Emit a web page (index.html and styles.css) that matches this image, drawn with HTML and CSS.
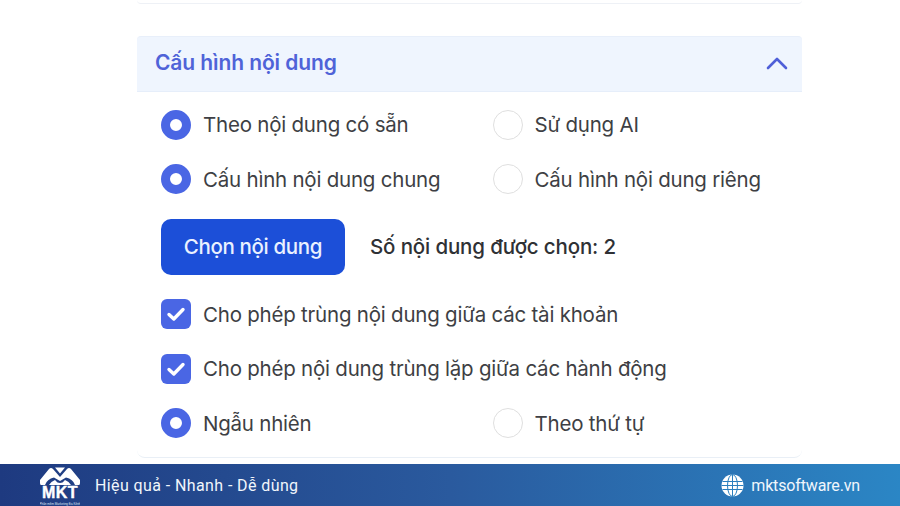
FILE: index.html
```html
<!DOCTYPE html>
<html lang="vi">
<head>
<meta charset="utf-8">
<title>Cấu hình nội dung</title>
<link rel="stylesheet" href="styles.css">
</head>
<body>
<main class="page">
  <div class="prev-card"></div>
  <section class="card">
    <header class="card-head">
      <h2>Cấu hình nội dung</h2>
      <svg class="chevron" width="22" height="14" viewBox="0 0 22 14"><path d="M2 12 L11 3 L20 12" fill="none" stroke="#4f5fd8" stroke-width="2.6" stroke-linecap="round" stroke-linejoin="round"/></svg>
    </header>
    <div class="card-body">
      <div class="row two">
        <label class="opt"><span class="radio on"></span>Theo nội dung có sẵn</label>
        <label class="opt"><span class="radio"></span>Sử dụng AI</label>
      </div>
      <div class="row two">
        <label class="opt"><span class="radio on"></span>Cấu hình nội dung chung</label>
        <label class="opt"><span class="radio"></span>Cấu hình nội dung riêng</label>
      </div>
      <div class="row action">
        <button class="btn">Chọn nội dung</button>
        <span class="count">Số nội dung được chọn: 2</span>
      </div>
      <label class="opt row"><span class="check"><svg width="20" height="16" viewBox="0 0 20 16"><path d="M3 8.5 L7.8 13 L17 3.5" fill="none" stroke="#fff" stroke-width="3.4" stroke-linecap="round" stroke-linejoin="round"/></svg></span>Cho phép trùng nội dung giữa các tài khoản</label>
      <label class="opt row"><span class="check"><svg width="20" height="16" viewBox="0 0 20 16"><path d="M3 8.5 L7.8 13 L17 3.5" fill="none" stroke="#fff" stroke-width="3.4" stroke-linecap="round" stroke-linejoin="round"/></svg></span>Cho phép nội dung trùng lặp giữa các hành động</label>
      <div class="row two">
        <label class="opt"><span class="radio on"></span>Ngẫu nhiên</label>
        <label class="opt"><span class="radio"></span>Theo thứ tự</label>
      </div>
    </div>
  </section>
</main>
<footer class="bar">
  <div class="brand">
    <div class="logo">
      <svg class="crown" width="40" height="18" viewBox="0 0 40 18"><path d="M1 18 Q0 18 0 16 V13 L9 2 Q11 0 13 2 L20 10 L27 2 Q29 0 31 2 L40 13 V16 Q40 18 39 18 H35 Q33 12 26 10.5 L20 14 L14 10.5 Q7 12 5 18 Z" fill="#fff"/><path d="M15 0.5 H25 L20 6.5 Z" fill="#fff"/><path d="M9 18 Q11 14.5 15 13 L17.5 15.5 L20 16 L22.5 15.5 L25 13 Q29 14.5 31 18 Z" fill="#fff"/></svg>
      <span class="logo-word">MKT</span>
      <span class="logo-sub">Phần mềm Marketing Đa Kênh</span>
    </div>
    <span class="slogan">Hiệu quả - Nhanh - Dễ dùng</span>
  </div>
  <div class="site">
    <svg width="23" height="23" viewBox="0 0 23 23"><circle cx="11.5" cy="11.5" r="11" fill="#fff"/><g fill="none" stroke="#2b7fbe" stroke-width="1"><ellipse cx="11.5" cy="11.5" rx="5" ry="11"/><path d="M11.5 .5 V22.5 M1.5 7.5 H21.5 M.5 11.5 H22.5 M1.5 15.5 H21.5"/></g></svg>
    <span>mktsoftware.vn</span>
  </div>
</footer>
</body>
</html>
```
FILE: styles.css
```css
* { box-sizing: border-box; }
html, body { margin: 0; height: 506px; overflow: hidden; background: #fff; }
body { display: flex; flex-direction: column; font-family: "Inter", "Noto Sans", sans-serif; }
.page { height: 464px; padding-left: 137px; overflow: hidden; }
.prev-card { width: 665px; height: 4px; border-bottom: 1.5px solid #eef1f6; border-radius: 0 0 6px 6px; }
.card { width: 665px; margin-top: 32px; height: 422px; border-bottom: 1.5px solid #e9eff6; border-radius: 0 0 8px 8px; }
.card-head { height: 56px; padding: 0 14px 3px 18px; display: flex; align-items: center; justify-content: space-between; background: #eff5fe; border-top: 1px solid #e8effa; border-bottom: 1px solid #e6eefa; border-radius: 4px 4px 0 0; }
.card-head h2 { margin: 0; font-size: 21px; font-weight: 600; color: #4f63d8; letter-spacing: -.1px; }
.card-body { padding: 17.5px 0 0 24px; display: flex; flex-direction: column; gap: 24.5px; }
.row { min-height: 30px; }
.two { display: grid; grid-template-columns: 331.5px 1fr; }
.opt { display: flex; align-items: center; gap: 12px; font-size: 20.5px; color: #3e3f44; letter-spacing: -.22px; white-space: nowrap; }
.radio { width: 30px; height: 30px; flex: none; border-radius: 50%; border: 1.5px solid #dfdfdf; background: #fff; }
.radio.on { border: 9.5px solid #4a66e4; }
.check { width: 30px; height: 30px; flex: none; border-radius: 6px; background: #4a66e4; display: flex; align-items: center; justify-content: center; }
.action { display: flex; align-items: center; gap: 25px; }
.btn { width: 184px; height: 56px; border: 0; border-radius: 10px; background: #1c4fd8; color: #eaf1ff; font: 500 20.5px "Inter", sans-serif; letter-spacing: -.35px; }
.count { font-size: 20.5px; font-weight: 500; color: #2f3135; letter-spacing: -.15px; }
.bar { height: 42px; display: flex; align-items: center; justify-content: space-between; padding: 1px 40px 0; color: #f1f6fc; background: linear-gradient(90deg, #1e3a80 0%, #2a5a9e 50%, #2b86c5 100%); }
.brand { display: flex; align-items: center; gap: 15px; }
.logo { width: 40px; height: 41px; padding-top: 2px; display: flex; flex-direction: column; align-items: center; overflow: hidden; }
.crown { flex: none; }
.logo-word { margin-top: 1.5px; font: 700 16px/12px "Liberation Sans", sans-serif; color: #fff; letter-spacing: .4px; -webkit-text-stroke: .4px #fff; }
.logo-sub { margin-top: 3px; font: 3px/4px "Liberation Sans", sans-serif; color: #dfe7f5; white-space: nowrap; }
.slogan { font: 16px "Roboto", sans-serif; letter-spacing: .4px; }
.site { display: flex; align-items: center; gap: 7px; font: 400 16px "Roboto", sans-serif; letter-spacing: -.15px; }
```
